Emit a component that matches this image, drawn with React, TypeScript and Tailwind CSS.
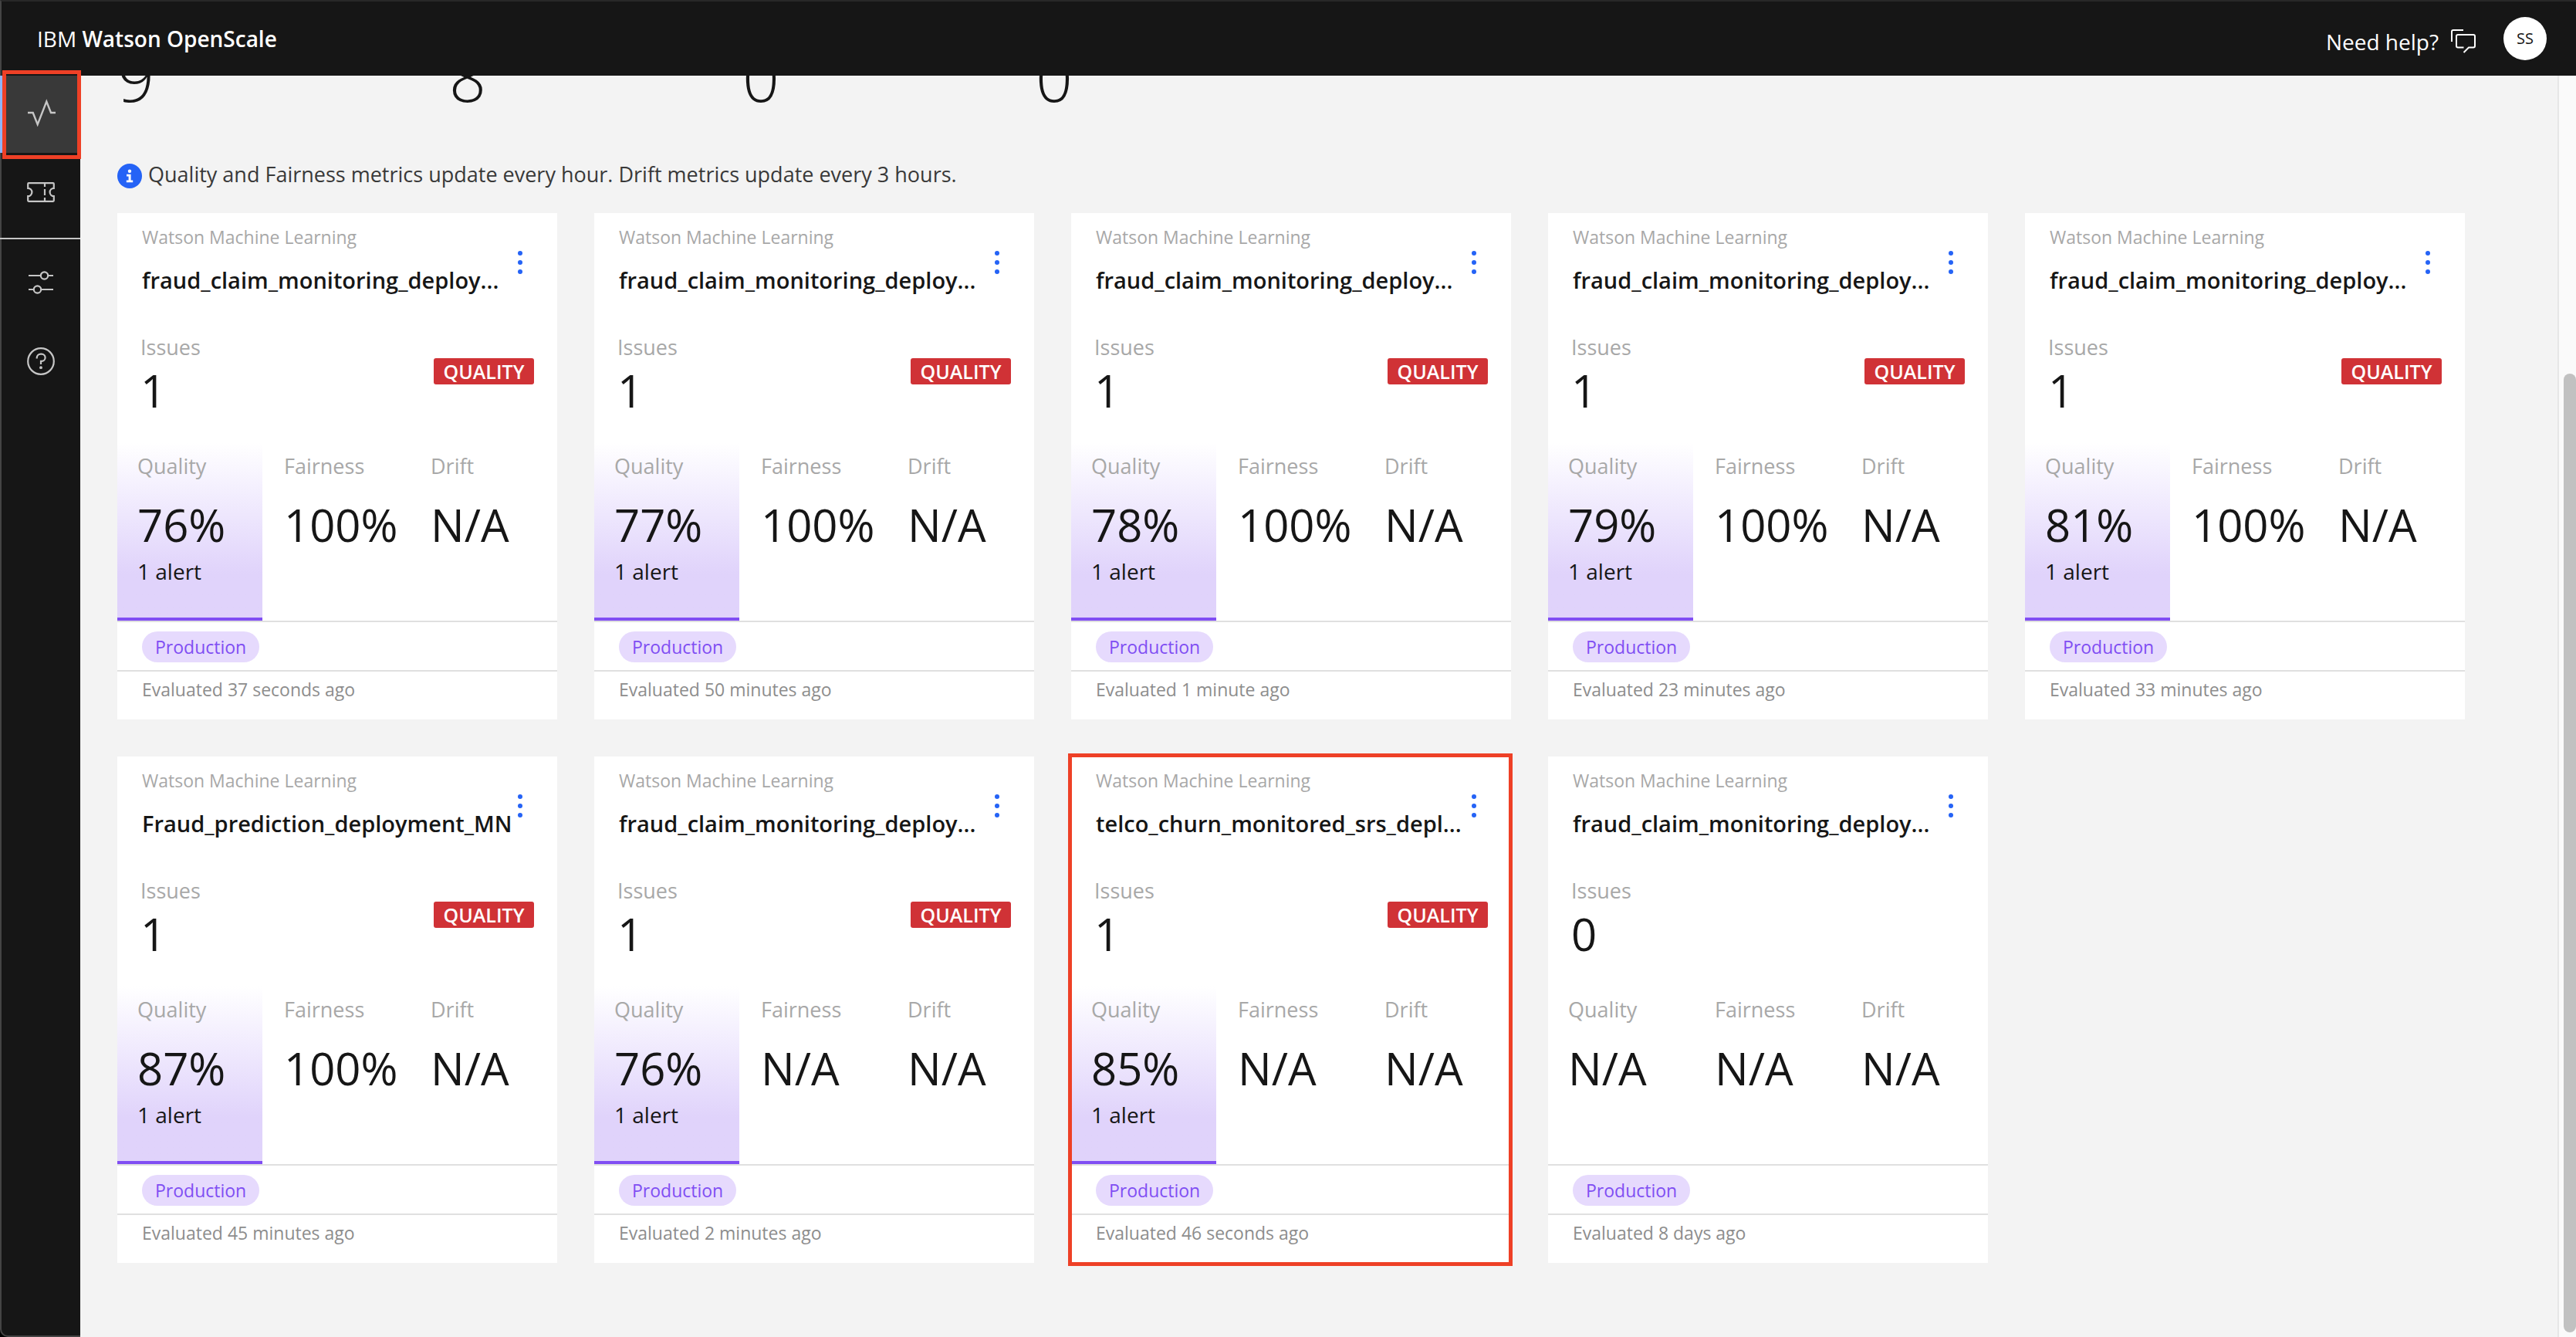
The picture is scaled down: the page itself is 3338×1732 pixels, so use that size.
import type { ReactNode } from 'react';

type Deployment = {
  name: string;
  issues: number;
  quality: string;
  fairness: string;
  drift: string;
  evaluated: string;
  selected?: boolean;
};

const FRAUD = 'fraud_claim_monitoring_deploy...';

const deployments: Deployment[] = [
  { name: FRAUD, issues: 1, quality: '76%', fairness: '100%', drift: 'N/A', evaluated: '37 seconds ago' },
  { name: FRAUD, issues: 1, quality: '77%', fairness: '100%', drift: 'N/A', evaluated: '50 minutes ago' },
  { name: FRAUD, issues: 1, quality: '78%', fairness: '100%', drift: 'N/A', evaluated: '1 minute ago' },
  { name: FRAUD, issues: 1, quality: '79%', fairness: '100%', drift: 'N/A', evaluated: '23 minutes ago' },
  { name: FRAUD, issues: 1, quality: '81%', fairness: '100%', drift: 'N/A', evaluated: '33 minutes ago' },
  { name: 'Fraud_prediction_deployment_MN', issues: 1, quality: '87%', fairness: '100%', drift: 'N/A', evaluated: '45 minutes ago' },
  { name: FRAUD, issues: 1, quality: '76%', fairness: 'N/A', drift: 'N/A', evaluated: '2 minutes ago' },
  { name: 'telco_churn_monitored_srs_depl...', issues: 1, quality: '85%', fairness: 'N/A', drift: 'N/A', evaluated: '46 seconds ago', selected: true },
  { name: FRAUD, issues: 0, quality: 'N/A', fairness: 'N/A', drift: 'N/A', evaluated: '8 days ago' },
];

function ActivityIcon() {
  return (
    <svg width="36" height="36" viewBox="0 0 36 36" fill="none" stroke="currentColor" strokeWidth="2.4" aria-hidden="true">
      <path d="M0 18H6.7L12.7 33.2L24.3 3.6L30 18H36" />
    </svg>
  );
}

function TicketIcon() {
  return (
    <svg width="36" height="26" viewBox="0 0 36 26" fill="none" stroke="currentColor" strokeWidth="2.2" aria-hidden="true">
      <path d="M2.2 1.2H33.8Q34.8 1.2 34.8 2.2V7.8A5.2 5.2 0 0 0 34.8 18.2V23.8Q34.8 24.8 33.8 24.8H2.2Q1.2 24.8 1.2 23.8V18.2A5.2 5.2 0 0 0 1.2 7.8V2.2Q1.2 1.2 2.2 1.2Z" />
      <path d="M23 2V6M23 9V17M23 20V24" />
    </svg>
  );
}

function SlidersIcon() {
  return (
    <svg width="36" height="36" viewBox="0 0 36 36" fill="none" stroke="currentColor" strokeWidth="2.2" aria-hidden="true">
      <path d="M2 9H17.8M27.2 9H34M2 27H8.8M18.2 27H34" />
      <circle cx="22.5" cy="9" r="4.7" />
      <circle cx="13.5" cy="27" r="4.7" />
    </svg>
  );
}

function HelpIcon() {
  return (
    <svg width="36" height="36" viewBox="0 0 36 36" fill="none" stroke="currentColor" strokeWidth="2.2" aria-hidden="true">
      <circle cx="18" cy="18" r="16.8" />
      <path d="M12.7 14.6V13.6A5 5 0 0 1 17.7 8.7H19A4.6 4.6 0 0 1 19 17.9H18V22" />
      <circle cx="18" cy="26.2" r="1.9" fill="currentColor" stroke="none" />
    </svg>
  );
}

function ChatIcon() {
  return (
    <svg width="32" height="32" viewBox="0 0 32 32" fill="none" stroke="currentColor" strokeWidth="2" aria-hidden="true">
      <path d="M16 1H3Q1 1 1 3V16" />
      <path d="M16.5 23.5H9Q7 23.5 7 21.5V9Q7 7 9 7H29Q31 7 31 9V21.5Q31 23.5 29 23.5H23L16.5 30" />
    </svg>
  );
}

function InfoIcon() {
  return (
    <svg width="32" height="32" viewBox="0 0 32 32" className="shrink-0" aria-hidden="true">
      <circle cx="16" cy="16" r="16" fill="#2563f6" />
      <circle cx="16" cy="9.7" r="2.2" fill="#fff" />
      <path d="M12 13.8H17.6V21.4H20.2V24.2H11.8V21.4H14.6V16.6H12Z" fill="#fff" />
    </svg>
  );
}

function NavItem({ label, active, children }: { label: string; active?: boolean; children: ReactNode }) {
  return (
    <a
      href="#"
      aria-label={label}
      className={
        active
          ? 'relative -ml-0.5 flex h-[100px] items-center justify-center border-l-[3px] border-[#8fb4fb] bg-[#393939] pb-1'
          : 'flex h-[102px] items-center justify-center'
      }
    >
      {children}
      {active && <span className="pointer-events-none absolute -bottom-2 -right-px -top-[7px] left-0 border-[5px] border-[#ee4026]" />}
    </a>
  );
}

function Metric({ label, value, alert }: { label: string; value: string; alert?: boolean }) {
  return (
    <div
      className={
        alert
          ? 'mr-0.5 h-[230px] border-b-4 border-[#804ef3] bg-linear-to-b from-white to-[#e0d3fb] to-75% pl-[26px] pt-2.5'
          : 'h-[230px] pl-[26px] pt-2.5'
      }
    >
      <dt className="text-[27px] leading-10 text-[#a8a8a8]">{label}</dt>
      <dd className="mt-6 whitespace-nowrap text-[58px] leading-16">{value}</dd>
      {alert && <dd className="mt-2 text-[28px] leading-10">1 alert</dd>}
    </div>
  );
}

function Card({ item }: { item: Deployment }) {
  return (
    <li className="relative bg-white">
      <div className="flex pl-8">
        <div className="min-w-0 flex-1 pt-[15px]">
          <p className="text-[23px] leading-8 text-[#a8a8a8]">Watson Machine Learning</p>
          <h2 className="mt-5 whitespace-nowrap text-[29px] font-semibold leading-10">{item.name}</h2>
        </div>
        <button type="button" aria-label="More options" className="mr-8 mt-10 flex h-12 w-8 flex-col items-center justify-center gap-1.5">
          <span className="size-1.5 rounded-full bg-[#2563f6]" />
          <span className="size-1.5 rounded-full bg-[#2563f6]" />
          <span className="size-1.5 rounded-full bg-[#2563f6]" />
        </button>
      </div>
      <div className="mt-[47px] flex items-start justify-between pl-[30px] pr-[30px]">
        <div>
          <p className="text-[27px] leading-10 text-[#a8a8a8]">Issues</p>
          <p className="mt-1 text-[58px] leading-16">{item.issues}</p>
        </div>
        {item.issues > 0 && (
          <span className="mt-[34px] w-[130px] rounded-[3px] bg-[#d03236] text-center text-[25px] font-semibold leading-[34px] text-white">QUALITY</span>
        )}
      </div>
      <dl className="mt-9 grid grid-cols-3">
        <Metric label="Quality" value={item.quality} alert={item.issues > 0} />
        <Metric label="Fairness" value={item.fairness} />
        <Metric label="Drift" value={item.drift} />
      </dl>
      <div className="border-y-2 border-[#e0e0e0] pb-2.5 pl-8 pt-3">
        <span className="inline-block rounded-full bg-[#e6dafd] px-[17px] align-top text-[23px] leading-10 text-[#804ef3]">Production</span>
      </div>
      <p className="pb-[23px] pl-8 pt-[7px] text-[23px] leading-8 text-[#8d8d8d]">Evaluated {item.evaluated}</p>
      {item.selected && <span className="pointer-events-none absolute -bottom-1 -left-1 -right-0.5 -top-1 border-[5px] border-[#ee4026]" />}
    </li>
  );
}

export default function App() {
  return (
    <div className="flex h-screen flex-col overflow-hidden bg-[#f3f3f3] font-['Open_Sans','Noto_Sans',sans-serif] text-[#161616]">
      <header className="flex h-[98px] shrink-0 items-center justify-between border-l-2 border-t-2 border-l-[#444444] border-t-[#282828] bg-[#161616] pl-[46px] pr-[38px] text-white">
        <h1 className="text-[28px] leading-10">
          IBM <span className="font-semibold">Watson OpenScale</span>
        </h1>
        <div className="flex items-center gap-9">
          <a href="#" className="flex items-center gap-4 pt-2 text-[28px] leading-10">
            Need help?
            <ChatIcon />
          </a>
          <button type="button" aria-label="Account" className="size-14 rounded-full bg-white text-[20px] leading-14 text-[#161616]">
            SS
          </button>
        </div>
      </header>
      <div className="flex min-h-0 flex-1">
        <div className="shrink-0 bg-black">
          <nav aria-label="Main" className="h-full w-[104px] rounded-bl-[10px] border-b-2 border-l-2 border-[#444444] bg-[#161616] text-[#c6c6c6]">
            <NavItem label="Insights" active>
              <ActivityIcon />
            </NavItem>
            <NavItem label="Explain transactions">
              <TicketIcon />
            </NavItem>
            <hr className="-ml-0.5 mb-[5px] mt-2 border-t-2 border-[#c6c6c6]" />
            <NavItem label="Configure">
              <SlidersIcon />
            </NavItem>
            <NavItem label="Support">
              <HelpIcon />
            </NavItem>
          </nav>
        </div>
        <main className="min-w-0 flex-1 overflow-hidden pl-12 pr-[120px]">
          <div className="-mt-10 flex text-[84px] font-light leading-[84px]">
            <span className="w-[430px]">9</span>
            <span className="w-[380px]">8</span>
            <span className="w-[380px]">0</span>
            <span className="w-[380px]">0</span>
          </div>
          <p className="mt-[66px] flex items-end gap-2 text-[27px] leading-9 text-[#393939]">
            <InfoIcon />
            Quality and Fairness metrics update every hour. Drift metrics update every 3 hours.
          </p>
          <ul className="mt-8 grid grid-cols-5 gap-12">
            {deployments.map((item, i) => (
              <Card key={i} item={item} />
            ))}
          </ul>
        </main>
        <div className="flex w-6 shrink-0 flex-col border-l-2 border-[#e6e6e6] bg-[#fafafa] pb-1.5 pl-1.5 pt-[386px]">
          <div className="flex-1 rounded-full bg-[#c1c1c1]" />
        </div>
      </div>
    </div>
  );
}
